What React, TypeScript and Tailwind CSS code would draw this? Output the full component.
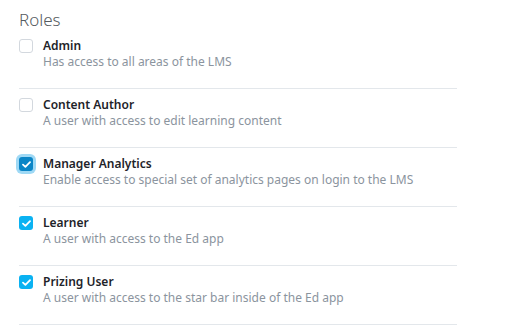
import React, { useState } from "react";

type Role = {
  id: string;
  name: string;
  description: string;
};

const roles: Role[] = [
  { id: "admin", name: "Admin", description: "Has access to all areas of the LMS" },
  { id: "author", name: "Content Author", description: "A user with access to edit learning content" },
  {
    id: "manager",
    name: "Manager Analytics",
    description: "Enable access to special set of analytics pages on login to the LMS",
  },
  { id: "learner", name: "Learner", description: "A user with access to the Ed app" },
  { id: "prizing", name: "Prizing User", description: "A user with access to the star bar inside of the Ed app" },
];

const CheckBox: React.FC<{ checked: boolean; focused: boolean; onClick: () => void }> = ({
  checked,
  focused,
  onClick,
}) => {
  const base = "mt-px flex h-[14px] w-[14px] shrink-0 items-center justify-center rounded-[3px]";
  let look = "border border-[#d3d8de] bg-white";
  if (checked) look = focused ? "bg-[#0b85c6] ring-[3px] ring-[#9fd9f5]" : "bg-[#0ab2f2]";
  return (
    <button type="button" onClick={onClick} className={`${base} ${look}`}>
      {checked && (
        <svg width="9" height="7" viewBox="0 0 9 7" fill="none">
          <path d="M1 3.6L3.4 5.8L8 1.2" stroke="white" strokeWidth="1.8" strokeLinecap="round" strokeLinejoin="round" />
        </svg>
      )}
    </button>
  );
};

export default function App() {
  const [selected, setSelected] = useState<string[]>(["manager", "learner", "prizing"]);
  const [focused, setFocused] = useState<string>("manager");

  const toggle = (id: string) => {
    setFocused(id);
    setSelected((prev) => (prev.includes(id) ? prev.filter((r) => r !== id) : [...prev, id]));
  };

  return (
    <div className="h-[325px] w-[531px] bg-white px-[19px] font-['Noto_Sans','Open_Sans',sans-serif]">
      <div className="w-[438px]">
        <h2 className="pt-[9px] text-[17px] font-light leading-[21px] text-[#555a60]">Roles</h2>
        <ul>
          {roles.map((role) => (
            <li key={role.id} className="flex gap-[10px] border-b border-[#e3e7eb] pt-[8px] pb-[18px]">
              <CheckBox
                checked={selected.includes(role.id)}
                focused={focused === role.id}
                onClick={() => toggle(role.id)}
              />
              <div className="flex flex-col">
                <span className="text-[12px] font-semibold leading-[16px] text-[#1e2329]">{role.name}</span>
                <span className="text-[12px] leading-[16px] text-[#8b949e]">{role.description}</span>
              </div>
            </li>
          ))}
        </ul>
      </div>
    </div>
  );
}
